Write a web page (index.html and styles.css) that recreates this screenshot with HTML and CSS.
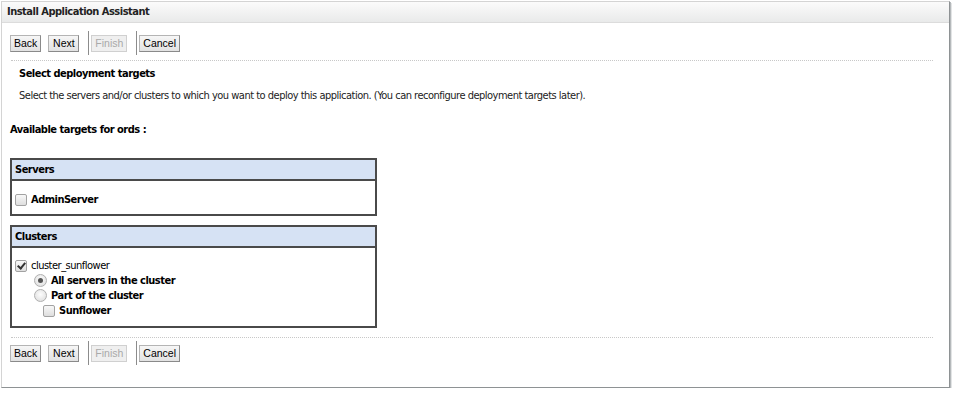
FILE: index.html
```html
<!DOCTYPE html>
<html>
<head>
<meta charset="utf-8">
<title>Install Application Assistant</title>
<link rel="stylesheet" href="styles.css">
</head>
<body>
<div class="frame">
  <div class="titlebar">Install Application Assistant</div>
  <div class="body">
    <div class="toolbar">
      <button class="btn">Back</button>
      <button class="btn">Next</button>
      <span class="sep"></span>
      <button class="btn disabled">Finish</button>
      <span class="sep"></span>
      <button class="btn">Cancel</button>
    </div>
    <div class="dots"></div>
    <div class="section">
      <h2 class="sec-title">Select deployment targets</h2>
      <p class="sec-desc">Select the servers and/or clusters to which you want to deploy this application. (You can reconfigure deployment targets later).</p>
    </div>
    <div class="avail">Available targets for ords :</div>
    <div class="tbox servers">
      <div class="tbox-head">Servers</div>
      <div class="tbox-body">
        <label class="row"><span class="cb"></span><span class="lbl b">AdminServer</span></label>
      </div>
    </div>
    <div class="tbox clusters">
      <div class="tbox-head">Clusters</div>
      <div class="tbox-body">
        <label class="row"><span class="cb checked"></span><span class="lbl">cluster_sunflower</span></label>
        <label class="row lvl1"><span class="rd on"></span><span class="lbl b">All servers in the cluster</span></label>
        <label class="row lvl1"><span class="rd"></span><span class="lbl b">Part of the cluster</span></label>
        <label class="row lvl2"><span class="cb"></span><span class="lbl b">Sunflower</span></label>
      </div>
    </div>
    <div class="dots bottom"></div>
    <div class="toolbar lower">
      <button class="btn">Back</button>
      <button class="btn">Next</button>
      <span class="sep"></span>
      <button class="btn disabled">Finish</button>
      <span class="sep"></span>
      <button class="btn">Cancel</button>
    </div>
  </div>
</div>
</body>
</html>
```
FILE: styles.css
```css
html, body {
  margin: 0;
  padding: 0;
  background: #ffffff;
}
body {
  font-family: "DejaVu Sans Condensed", "DejaVu Sans", sans-serif;
  font-size: 11px;
  letter-spacing: -0.5px;
  color: #000;
}
.frame {
  margin: 1px 0 0 1px;
  width: 947px;
  height: 385px;
  border: 1px solid #d4d4d4;
  border-right: 1px solid #8e9294;
  border-bottom: 1px solid #8e9294;
  box-shadow: 1px 1px 0 #b5b9bb, 2px 2px 0 #e2e4e5;
  background: #fff;
  box-sizing: content-box;
}
.titlebar {
  height: 20px;
  line-height: 20px;
  padding-left: 5px;
  font-weight: bold;
  color: #222;
  background: linear-gradient(#fbfbfb, #e9eaea);
  border-bottom: 1px solid #dcdcdc;
}
.body {
  padding: 0 8px 0 8px;
}
.toolbar {
  display: flex;
  align-items: center;
  height: 24px;
  margin-top: 8px;
  padding-left: 0;
}
.toolbar.lower {
  margin-top: 3px;
}
.btn {
  font-family: "Liberation Sans", Arial, sans-serif;
  font-size: 10.5px;
  letter-spacing: 0;
  box-sizing: border-box;
  min-width: 31px;
  height: 17px;
  padding: 0 3px;
  line-height: 15px;
  color: #000;
  background: linear-gradient(#f6f6f6, #e2e2e2);
  border: 1px solid #b4b4b4;
  border-right-color: #8a8a8a;
  border-bottom-color: #8a8a8a;
  border-radius: 0;
  margin-right: 7px;
}
.btn.disabled {
  color: #a9a9a9;
  background: #efefef;
  border-color: #d0d0d0;
}
.sep {
  width: 1px;
  height: 24px;
  background: #8c8c8c;
  margin-right: 2px;
  margin-left: 2px;
}
.dots {
  height: 0;
  border-top: 1px dotted #c8c8c8;
  margin: 5px 8px 0 1px;
}
.dots.bottom {
  margin-top: 9px;
}
.section {
  padding-left: 9px;
}
.sec-title {
  margin: 5px 0 0 0;
  font-size: 11px;
  font-weight: bold;
  line-height: 16px;
}
.sec-desc {
  margin: 6px 0 0 0;
  line-height: 16px;
  color: #222;
}
.avail {
  margin-top: 18px;
  padding-left: 0;
  font-weight: bold;
  line-height: 16px;
}
.tbox {
  width: 363px;
  margin-left: 0;
  border: 2px solid #4a4a4a;
  margin-top: 20px;
}
.tbox.clusters {
  margin-top: 9px;
}
.tbox-head {
  height: 19px;
  line-height: 19px;
  padding-left: 3px;
  font-weight: bold;
  background: #d6e2f4;
  border-bottom: 2px solid #4a4a4a;
}
.servers .tbox-body {
  padding: 11px 3px 7px 3px;
}
.clusters .tbox-body {
  padding: 10px 3px 8px 3px;
}
.row {
  display: flex;
  align-items: center;
  height: 15px;
}
.lvl1 { padding-left: 19px; }
.lvl2 { padding-left: 28px; }
.lbl {
  margin-left: 4px;
}
.lbl.b { font-weight: bold; }
.cb {
  width: 10px;
  height: 10px;
  border: 1px solid #a2a2a2;
  border-radius: 2px;
  background: linear-gradient(#f8f8f8, #dedede);
  position: relative;
  flex: none;
}
.cb.checked::after {
  content: "";
  position: absolute;
  left: 3px;
  top: 0px;
  width: 3px;
  height: 6px;
  border-right: 2px solid #333;
  border-bottom: 2px solid #333;
  transform: rotate(40deg);
}
.rd {
  width: 11px;
  height: 11px;
  border: 1px solid #b0b0b0;
  border-radius: 50%;
  background: radial-gradient(circle at 50% 40%, #fdfdfd, #dadada);
  position: relative;
  flex: none;
}
.rd.on::after {
  content: "";
  position: absolute;
  left: 3px;
  top: 3px;
  width: 5px;
  height: 5px;
  border-radius: 50%;
  background: #555;
}
```
